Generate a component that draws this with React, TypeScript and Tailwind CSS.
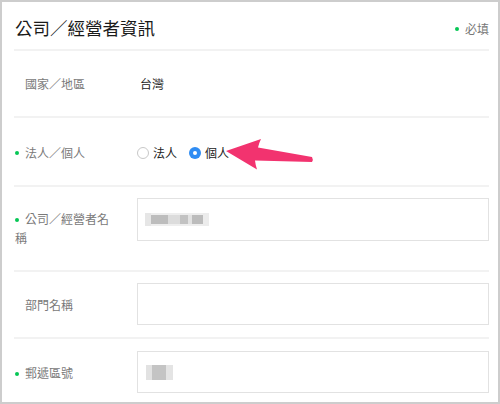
import React from "react";

const Dot = () => (
  <span className="inline-block w-[4px] h-[4px] rounded-full bg-[#06c755] mr-[6px] align-middle relative -top-[1px]" />
);

const Radio = ({ checked, label }: { checked?: boolean; label: string }) => (
  <label className="flex items-center gap-[4px]">
    {checked ? (
      <span className="w-[12px] h-[12px] rounded-full bg-[#2f8cf3] flex items-center justify-center">
        <span className="w-[4px] h-[4px] rounded-full bg-white" />
      </span>
    ) : (
      <span className="w-[12px] h-[12px] rounded-full border border-[#c8c8c8] bg-white" />
    )}
    <span className="text-[12px] text-[#222]">{label}</span>
  </label>
);

export default function App() {
  return (
    <div
      className="relative w-[500px] h-[404px] border-2 border-[#cdcdcd] bg-white overflow-hidden"
      style={{ fontFamily: '"Noto Sans CJK TC", "Noto Sans", sans-serif' }}
    >
      <div className="pl-[12px] pr-[9px]">
        {/* header */}
        <div className="h-[49px] pt-[5px] flex items-center justify-between border-b-2 border-[#f2f2f2]">
          <div className="text-[17.5px] text-[#1a1a1a] ml-[1px]">公司／經營者資訊</div>
          <div className="flex items-center text-[12px] text-[#777] pt-[2px]">
            <span className="inline-block w-[4px] h-[4px] rounded-full bg-[#06c755] mr-[6px]" />
            必填
          </div>
        </div>

        {/* row 1 */}
        <div className="h-[67px] flex items-center border-b-2 border-[#f2f2f2]">
          <div className="w-[100px] ml-[1px] pl-[10px] text-[12px] text-[#7a7a7a]">國家／地區</div>
          <div className="ml-[25px] text-[12px] text-[#222]">台灣</div>
        </div>

        {/* row 2 */}
        <div className="h-[69px] pt-[2px] flex items-center border-b-2 border-[#f2f2f2]">
          <div className="w-[100px] ml-[1px] text-[12px] text-[#7a7a7a]">
            <Dot />
            法人／個人
          </div>
          <div className="ml-[22px] flex items-center gap-[12px]">
            <Radio label="法人" />
            <Radio checked label="個人" />
          </div>
        </div>

        {/* row 3 */}
        <div className="h-[85px] pt-[11px] flex items-start border-b-2 border-[#f2f2f2]">
          <div className="w-[100px] ml-[1px] mt-[11px] text-[12px] leading-[19px] text-[#7a7a7a]">
            <Dot />
            公司／經營者名稱
          </div>
          <div className="ml-[22px] flex-1 h-[43px] border border-[#e2e2e2] flex items-center pl-[7px]">
            <div className="flex items-center h-[13px] bg-[#eeeeee] blur-[0.6px]">
              <span className="w-[6px] h-[13px] bg-[#e6e6e6]" />
              <span className="w-[17px] h-[9px] bg-[#bdbdbd]" />
              <span className="w-[12px] h-[9px] bg-[#dcdcdc]" />
              <span className="w-[8px] h-[9px] bg-[#c2c2c2]" />
              <span className="w-[4px] h-[9px] bg-[#e2e2e2]" />
              <span className="w-[11px] h-[9px] bg-[#bcbcbc]" />
              <span className="w-[6px] h-[13px] bg-[#ececec]" />
            </div>
          </div>
        </div>

        {/* row 4 */}
        <div className="h-[67px] pt-[11px] pb-[12px] flex items-center border-b-2 border-[#f2f2f2]">
          <div className="w-[100px] ml-[1px] pl-[10px] pt-[2px] text-[12px] text-[#7a7a7a]">部門名稱</div>
          <div className="ml-[22px] flex-1 h-[42px] border border-[#e2e2e2]" />
        </div>

        {/* row 5 */}
        <div className="pt-[12px] flex items-center">
          <div className="w-[100px] ml-[1px] pt-[2px] text-[12px] text-[#7a7a7a]">
            <Dot />
            郵遞區號
          </div>
          <div className="ml-[22px] flex-1 h-[42px] border border-[#e2e2e2] flex items-center pl-[8px]">
            <div className="flex items-center h-[15px] bg-[#ececec] blur-[0.6px]">
              <span className="w-[6px] h-[15px] bg-[#e2e2e2]" />
              <span className="w-[14px] h-[15px] bg-[#c4c4c4]" />
              <span className="w-[7px] h-[15px] bg-[#e4e4e4]" />
            </div>
          </div>
        </div>
      </div>

      {/* annotation arrow */}
      <svg
        className="absolute left-0 top-0 pointer-events-none"
        width="500"
        height="404"
        viewBox="0 0 500 404"
      >
        <path
          d="M226 151 L261 139 Q259 143 258 147.5 L312 157 Q313.5 159.5 312 162 L255 160.5 Q255.5 165 257 169.5 Z"
          fill="#f2336f"
          transform="translate(-2 -2)"
        />
      </svg>
    </div>
  );
}
